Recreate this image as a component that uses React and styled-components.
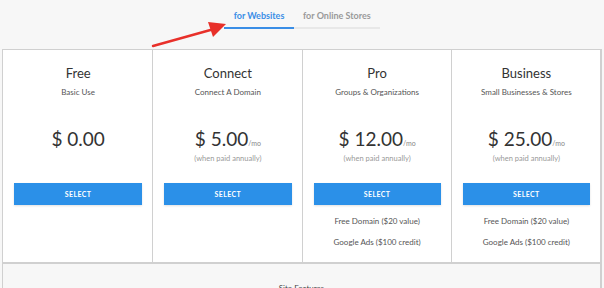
import React from 'react';
import styled, { createGlobalStyle } from 'styled-components';

const plans = [
  { name: 'Free', sub: 'Basic Use', price: '0.00', monthly: false, extras: [] },
  { name: 'Connect', sub: 'Connect A Domain', price: '5.00', monthly: true, extras: [] },
  {
    name: 'Pro',
    sub: 'Groups & Organizations',
    price: '12.00',
    monthly: true,
    extras: ['Free Domain ($20 value)', 'Google Ads ($100 credit)'],
  },
  {
    name: 'Business',
    sub: 'Small Businesses & Stores',
    price: '25.00',
    monthly: true,
    extras: ['Free Domain ($20 value)', 'Google Ads ($100 credit)'],
  },
];

const App = () => {
  return (
    <Page>
      <GlobalStyle />
      <Tabs>
        <Tab active>for Websites</Tab>
        <Tab>for Online Stores</Tab>
        <Arrow width="90" height="30" viewBox="0 0 90 30">
          <line x1="3" y1="25" x2="64" y2="8" stroke="#e8302a" strokeWidth="2.4" strokeLinecap="round" />
          <polygon points="76,3 58,1 63,16" fill="#e8302a" />
        </Arrow>
      </Tabs>
      <Table>
        <Plans>
          {plans.map((p) => (
            <Plan key={p.name}>
              <Name>{p.name}</Name>
              <Sub>{p.sub}</Sub>
              <Price>
                $ {p.price}
                {p.monthly && <Mo>/mo</Mo>}
              </Price>
              <Note>{p.monthly ? '(when paid annually)' : '\u00a0'}</Note>
              <Button>SELECT</Button>
              {p.extras.map((e) => (
                <Extra key={e}>{e}</Extra>
              ))}
            </Plan>
          ))}
        </Plans>
        <Features>Site Features</Features>
      </Table>
    </Page>
  );
};

const GlobalStyle = createGlobalStyle`
  body {
    margin: 0;
    background: #f7f7f7;
    font-family: Lato, "Open Sans", sans-serif;
  }
`;

const Page = styled.div`
  width: 604px;
  height: 288px;
  overflow: hidden;
  padding-top: 7px;
  box-sizing: border-box;
`;

const Tabs = styled.div`
  position: relative;
  display: flex;
  margin-left: 224px;
  width: 156px;
  border-bottom: 2px solid #e8e8e8;
  height: 20px;
`;

const Tab = styled.div`
  padding: 3px 0 0;
  padding-left: ${(p) => (p.active ? '0' : '9px')};
  font-size: 9px;
  font-weight: 700;
  white-space: nowrap;
  color: ${(p) => (p.active ? '#3a8ee6' : '#9a9a9a')};
  border-bottom: 2px solid ${(p) => (p.active ? '#3a8ee6' : 'transparent')};
  margin-bottom: -2px;
  width: ${(p) => (p.active ? '70px' : 'auto')};
  box-sizing: border-box;
  text-align: ${(p) => (p.active ? 'center' : 'left')};
`;

const Arrow = styled.svg`
  position: absolute;
  left: -74px;
  top: 14px;
`;

const Table = styled.div`
  margin: 20px 2px 0 2px;
  border: 1px solid #d0d0d0;
  border-right-width: 2px;
  border-bottom: none;
`;

const Plans = styled.div`
  display: grid;
  grid-template-columns: repeat(4, 1fr);
  background: #fff;
  border-bottom: 2px solid #d0d0d0;
  height: 214px;
  box-sizing: border-box;
`;

const Plan = styled.div`
  display: flex;
  flex-direction: column;
  align-items: center;
  padding: 14px 10px 0 11px;
  border-left: 1px solid #d0d0d0;
  &:first-child {
    border-left: none;
  }
`;

const Name = styled.div`
  font-size: 13px;
  color: #333;
  line-height: 18px;
`;

const Sub = styled.div`
  margin-top: 5px;
  font-size: 8px;
  color: #555;
  line-height: 10px;
`;

const Price = styled.div`
  margin-top: 30px;
  height: 24px;
  font-size: 19px;
  font-weight: 400;
  color: #333;
  line-height: 24px;
  white-space: nowrap;
`;

const Mo = styled.span`
  font-size: 7px;
  line-height: 1;
  color: #888;
`;

const Note = styled.div`
  margin-top: 3px;
  font-size: 7.5px;
  color: #999;
  line-height: 10px;
`;

const Button = styled.button`
  margin-top: 19px;
  width: 100%;
  height: 22px;
  border: none;
  background: #2b90e8;
  color: #fff;
  font-family: inherit;
  font-size: 7px;
  font-weight: 700;
  letter-spacing: 0.4px;
  box-shadow: 0 1px 2px rgba(0, 0, 0, 0.12);
`;

const Extra = styled.div`
  margin-top: 11px;
  font-size: 8px;
  color: #555;
  line-height: 10px;
  &:nth-of-type(1) {
    margin-top: 8px;
  }
`;

const Features = styled.div`
  padding-top: 19px;
  text-align: center;
  font-size: 8px;
  color: #444;
`;

export default App;
